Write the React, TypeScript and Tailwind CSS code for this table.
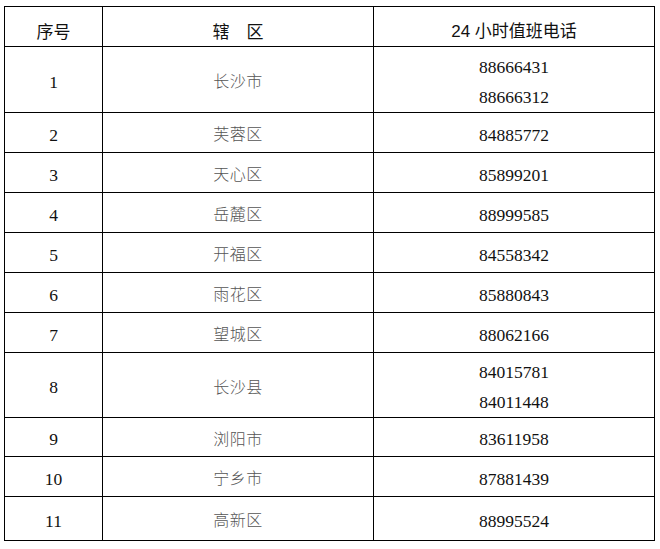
import React from "react";

type Row = { no: string; area: string; phones: string[]; h: number };

const rows: Row[] = [
  { no: "1", area: "长沙市", phones: ["88666431", "88666312"], h: 66 },
  { no: "2", area: "芙蓉区", phones: ["84885772"], h: 40 },
  { no: "3", area: "天心区", phones: ["85899201"], h: 40 },
  { no: "4", area: "岳麓区", phones: ["88999585"], h: 40 },
  { no: "5", area: "开福区", phones: ["84558342"], h: 40 },
  { no: "6", area: "雨花区", phones: ["85880843"], h: 40 },
  { no: "7", area: "望城区", phones: ["88062166"], h: 40 },
  { no: "8", area: "长沙县", phones: ["84015781", "84011448"], h: 65 },
  { no: "9", area: "浏阳市", phones: ["83611958"], h: 39 },
  { no: "10", area: "宁乡市", phones: ["87881439"], h: 40 },
  { no: "11", area: "高新区", phones: ["88995524"], h: 44 },
];

export default function App() {
  return (
    <div className="bg-white w-[660px] h-[549px] pt-[6px] pl-[4px]">
      <table className="border-collapse w-[650px] table-fixed text-[#111]">
        <colgroup>
          <col className="w-[98px]" />
          <col className="w-[271px]" />
          <col className="w-[281px]" />
        </colgroup>
        <thead>
          <tr className="h-[40px]">
            <th className="border border-black font-normal text-[17px] leading-none pt-[8px] pb-0 px-0 align-middle [font-family:'Noto_Sans_CJK_SC',sans-serif]">序号</th>
            <th className="border border-black font-normal text-[17px] leading-none pt-[8px] pb-0 px-0 align-middle [font-family:'Noto_Sans_CJK_SC',sans-serif]">辖{"\u3000"}区</th>
            <th className="border border-black font-normal text-[17px] leading-none pt-[8px] pb-0 px-0 align-middle [font-family:'Noto_Sans_CJK_SC',sans-serif]">
              <span className="[font-family:'Liberation_Sans',sans-serif]">24 </span>小时值班电话
            </th>
          </tr>
        </thead>
        <tbody>
          {rows.map((r) => {
            const multi = r.phones.length > 1;
            return (
              <tr key={r.no} style={{ height: r.h }}>
                <td className="border border-black text-center align-middle pt-[6px] pb-0 px-0 text-[17.5px] leading-none [font-family:'Liberation_Serif',serif]">
                  {r.no}
                </td>
                <td className="border border-black text-center align-middle pt-[1px] pb-0 px-0 text-[16px] leading-none text-[#555] font-light tracking-[0.5px] [font-family:'Noto_Sans_CJK_SC',sans-serif]">
                  {r.area}
                </td>
                <td
                  className={
                    multi
                      ? "border border-black text-center align-middle pt-[4px] pb-0 px-0 text-[17.5px] leading-[30px] [font-family:'Liberation_Serif',serif]"
                      : "border border-black text-center align-middle pt-[6px] pb-0 px-0 text-[17.5px] leading-none [font-family:'Liberation_Serif',serif]"
                  }
                >
                  {r.phones.map((p) => (
                    <div key={p}>{p}</div>
                  ))}
                </td>
              </tr>
            );
          })}
        </tbody>
      </table>
    </div>
  );
}
